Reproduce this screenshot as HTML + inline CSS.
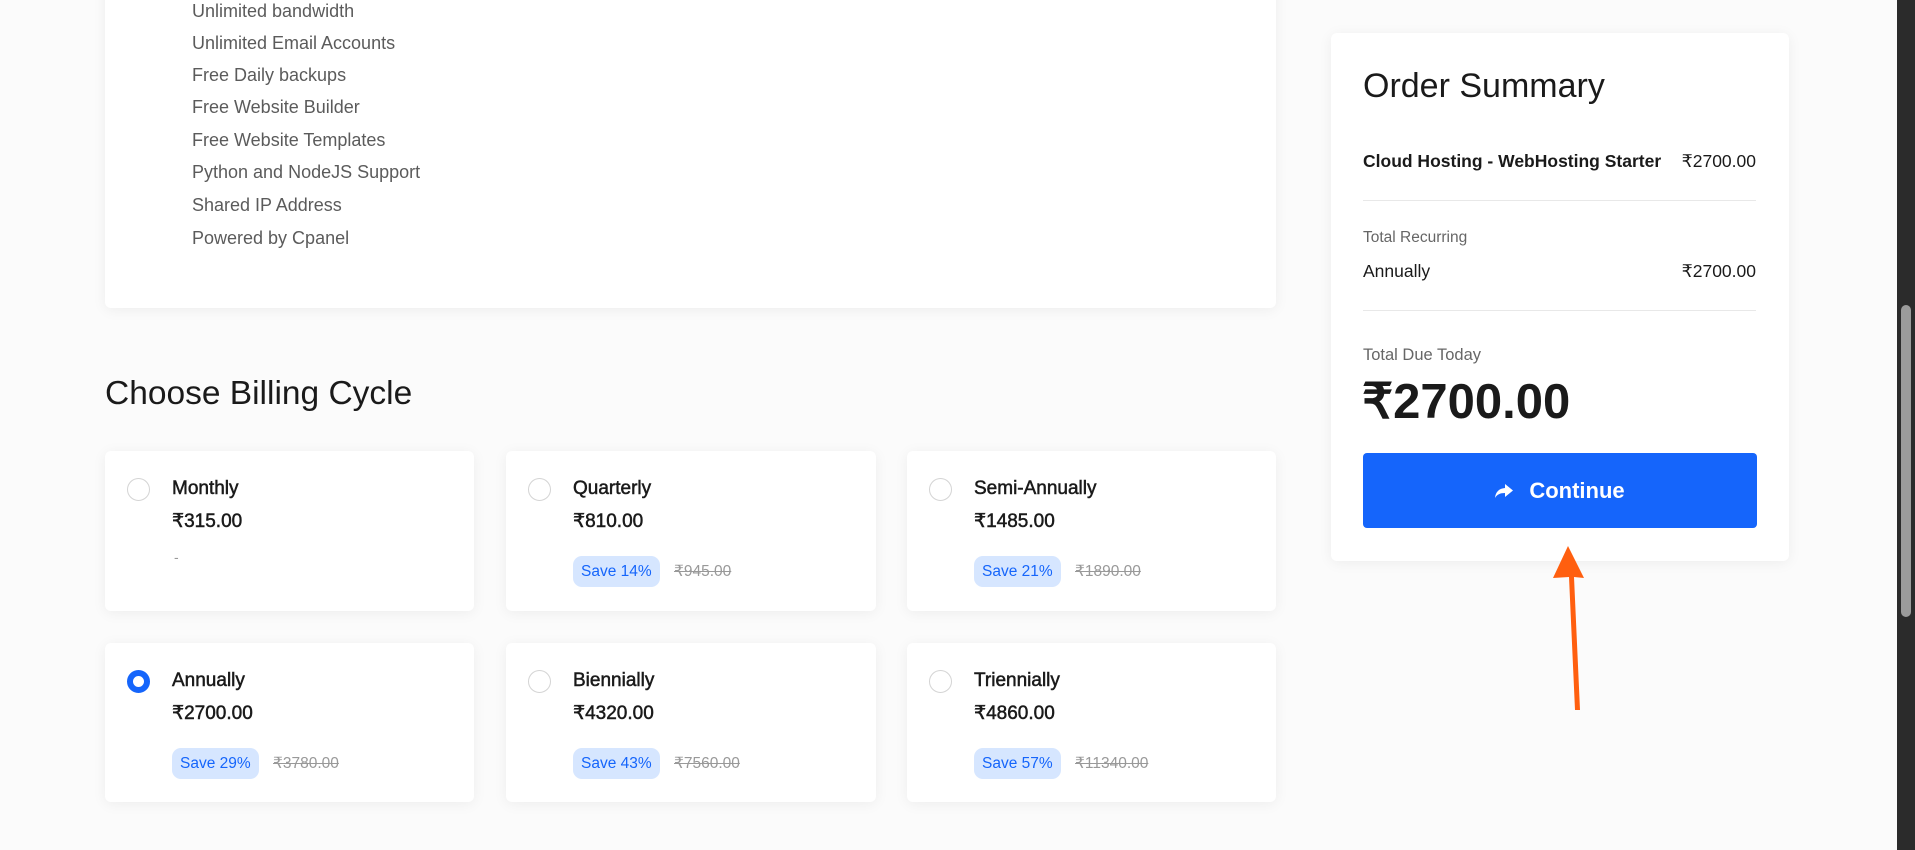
<!DOCTYPE html>
<html><head><meta charset="utf-8"><style>
*{margin:0;padding:0;box-sizing:border-box}
body{width:1915px;height:850px;overflow:hidden;background:#fbfbfb;font-family:"Liberation Sans",Arial,sans-serif;position:relative;color:#1a1a1a}
.card{position:absolute;background:#fff;border-radius:6px;box-shadow:0 2px 14px rgba(0,0,0,0.06)}
.feat{position:absolute;left:192px;font-size:18px;color:#5b5b5b;line-height:20px}
.h{position:absolute;font-weight:300}
.bc .radio{position:absolute;left:22px;top:27px;width:23px;height:23px;border:1.5px solid #d4d4d4;border-radius:50%}
.bc .radio.on{border:6px solid #1565fb}
.bc .t{position:absolute;left:67px;top:27px;font-size:19px;color:#1a1a1a;-webkit-text-stroke:0.5px #1a1a1a}
.bc .p{position:absolute;left:67px;top:59px;font-size:19px;color:#1a1a1a;-webkit-text-stroke:0.5px #1a1a1a}
.bc .badge{position:absolute;left:67px;top:105px;height:31px;padding:0 8px;line-height:31px;border-radius:9px;background:#d6e6ff;color:#1565fb;font-size:15.5px}
.bc .old{position:absolute;top:111px;font-size:15.5px;color:#999;text-decoration:line-through}
.row{position:absolute;left:1363px;width:393px;display:flex;justify-content:space-between}
.div{position:absolute;left:1363px;width:393px;height:1px;background:#e8e8e8}
</style></head><body>
<div class="card" style="left:105px;top:-20px;width:1171px;height:328px"></div>
<div class="feat" style="top:1px">Unlimited bandwidth</div>
<div class="feat" style="top:33px">Unlimited Email Accounts</div>
<div class="feat" style="top:65px">Free Daily backups</div>
<div class="feat" style="top:97px">Free Website Builder</div>
<div class="feat" style="top:130px">Free Website Templates</div>
<div class="feat" style="top:162px">Python and NodeJS Support</div>
<div class="feat" style="top:195px">Shared IP Address</div>
<div class="feat" style="top:228px">Powered by Cpanel</div>

<div class="h" style="left:105px;top:375px;font-size:33.5px;color:#1a1a1a">Choose Billing Cycle</div>

<div class="card bc" style="left:105px;top:451px;width:369px;height:160px"><div class="radio"></div><div class="t">Monthly</div><div class="p">₹315.00</div><div style="position:absolute;left:69px;top:98px;color:#999;font-size:14px">-</div></div>
<div class="card bc" style="left:506px;top:451px;width:370px;height:160px"><div class="radio"></div><div class="t">Quarterly</div><div class="p">₹810.00</div><div class="badge">Save 14%</div><div class="old" style="left:168px">₹945.00</div></div>
<div class="card bc" style="left:907px;top:451px;width:369px;height:160px"><div class="radio"></div><div class="t">Semi-Annually</div><div class="p">₹1485.00</div><div class="badge">Save 21%</div><div class="old" style="left:168px">₹1890.00</div></div>
<div class="card bc" style="left:105px;top:643px;width:369px;height:159px"><div class="radio on"></div><div class="t">Annually</div><div class="p">₹2700.00</div><div class="badge">Save 29%</div><div class="old" style="left:168px">₹3780.00</div></div>
<div class="card bc" style="left:506px;top:643px;width:370px;height:159px"><div class="radio"></div><div class="t">Biennially</div><div class="p">₹4320.00</div><div class="badge">Save 43%</div><div class="old" style="left:168px">₹7560.00</div></div>
<div class="card bc" style="left:907px;top:643px;width:369px;height:159px"><div class="radio"></div><div class="t">Triennially</div><div class="p">₹4860.00</div><div class="badge">Save 57%</div><div class="old" style="left:168px">₹11340.00</div></div>

<div class="card" style="left:1331px;top:33px;width:458px;height:528px"></div>
<div class="h" style="left:1363px;top:67px;font-size:34px;color:#1a1a1a">Order Summary</div>
<div class="row" style="top:151px;font-size:17.5px"><span style="font-weight:bold">Cloud Hosting - WebHosting Starter</span><span>₹2700.00</span></div>
<div class="div" style="top:200px"></div>
<div style="position:absolute;left:1363px;top:229px;font-size:15.5px;color:#666">Total Recurring</div>
<div class="row" style="top:261px;font-size:17.5px"><span>Annually</span><span>₹2700.00</span></div>
<div class="div" style="top:310px"></div>
<div style="position:absolute;left:1363px;top:346px;font-size:16.5px;color:#666">Total Due Today</div>
<div style="position:absolute;left:1362px;top:373px;font-size:49px;font-weight:bold;color:#1a1a1a">₹2700.00</div>
<div style="position:absolute;left:1363px;top:453px;width:394px;height:75px;background:#1565fb;border-radius:4px;color:#fff;font-weight:bold;font-size:22px;display:flex;align-items:center;justify-content:center;gap:16px">
<svg width="18" height="14" viewBox="0 0 18 14"><path d="M10 0 L18 6.5 L10 13 L10 9 C5 9 2 10.5 0 14 C0.5 8 4 4.5 10 4 Z" fill="#fff"/></svg><span>Continue</span></div>

<svg style="position:absolute;left:1540px;top:540px" width="60" height="180" viewBox="0 0 60 180">
<path d="M28 6 L44 38 L34 37 L40 170 L35 170 L29 37 L13 38 Z" fill="#ff5f0f"/></svg>

<div style="position:absolute;left:1897px;top:0;width:18px;height:850px;background:#2b2b2b"></div>
<div style="position:absolute;left:1901px;top:305px;width:10px;height:312px;background:#9b9b9b;border-radius:5px"></div>
</body></html>
